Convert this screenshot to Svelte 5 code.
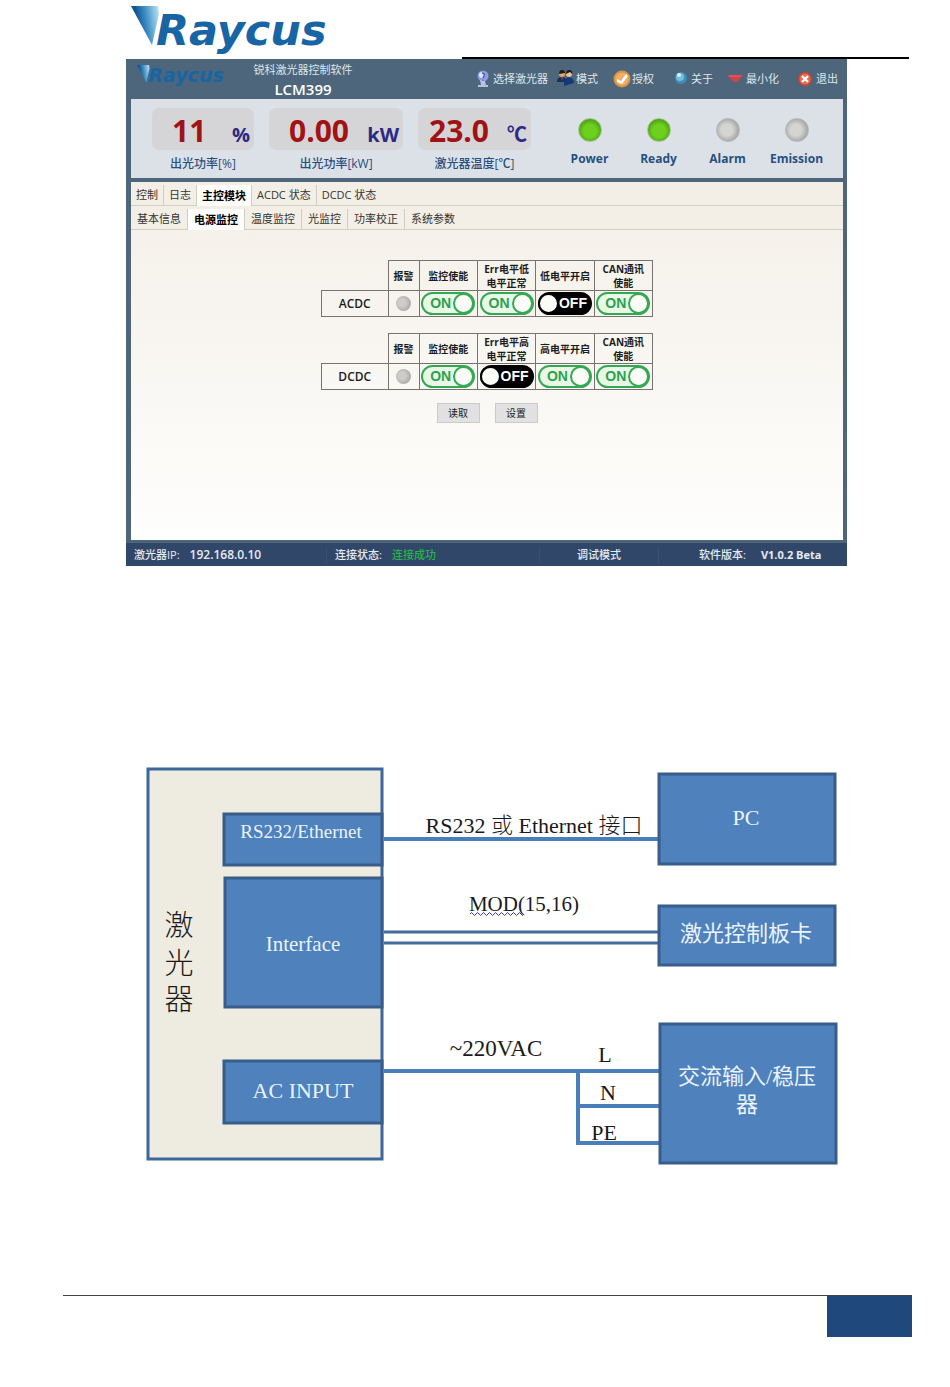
<script>
  const menu = [
    { icon: 'laser', label: '选择激光器' },
    { icon: 'users', label: '模式' },
    { icon: 'auth', label: '授权' },
    { icon: 'about', label: '关于' },
    { icon: 'min', label: '最小化' },
    { icon: 'exit', label: '退出' }
  ];

  const readings = [
    { value: '11', unit: '%', label: '出光功率[%]' },
    { value: '0.00', unit: 'kW', label: '出光功率[kW]' },
    { value: '23.0', unit: '℃', label: '激光器温度[℃]' }
  ];

  const leds = [
    { label: 'Power', on: true },
    { label: 'Ready', on: true },
    { label: 'Alarm', on: false },
    { label: 'Emission', on: false }
  ];

  const mainTabs = ['控制', '日志', '主控模块', 'ACDC 状态', 'DCDC 状态'];
  const subTabs = ['基本信息', '电源监控', '温度监控', '光监控', '功率校正', '系统参数'];
  let mainTab = $state('主控模块');
  let subTab = $state('电源监控');

  let supplies = $state([
    {
      name: 'ACDC',
      heads: [['监控使能'], ['Err电平低', '电平正常'], ['低电平开启'], ['CAN通讯', '使能']],
      values: [true, true, false, true]
    },
    {
      name: 'DCDC',
      heads: [['监控使能'], ['Err电平高', '电平正常'], ['高电平开启'], ['CAN通讯', '使能']],
      values: [true, false, true, true]
    }
  ]);

  // diagram
  const nodes = [
    { x: 224, y: 814, w: 158, h: 51 },
    { x: 225, y: 878, w: 157, h: 129 },
    { x: 224, y: 1061, w: 158, h: 62 },
    { x: 659, y: 774, w: 176, h: 90 },
    { x: 659, y: 906, w: 176, h: 59 },
    { x: 660, y: 1024, w: 176, h: 139 }
  ];

  const nodeTexts = [
    { x: 301, y: 838, size: 19, text: 'RS232/Ethernet' },
    { x: 303, y: 951, size: 21, text: 'Interface' },
    { x: 303, y: 1098, size: 22, text: 'AC INPUT' },
    { x: 746, y: 825, size: 22, text: 'PC' },
    { x: 746, y: 941, size: 22, text: '激光控制板卡' },
    { x: 747, y: 1084, size: 22, text: '交流输入/稳压' },
    { x: 747, y: 1112, size: 22, text: '器' }
  ];

  const wireTexts = [
    { x: 534, y: 833, size: 22, text: 'RS232 或 Ethernet 接口' },
    { x: 524, y: 911, size: 21, text: 'MOD(15,16)' },
    { x: 496, y: 1056, size: 23, text: '~220VAC' },
    { x: 605, y: 1062, size: 22, text: 'L' },
    { x: 608, y: 1100, size: 22, text: 'N' },
    { x: 604, y: 1140, size: 22, text: 'PE' },
    { x: 179, y: 936, size: 29, text: '激' },
    { x: 179, y: 974, size: 29, text: '光' },
    { x: 179, y: 1010, size: 29, text: '器' }
  ];
</script>

{#snippet logo(id)}
  <svg viewBox="0 0 200 52" aria-label="Raycus" role="img">
    <defs>
      <linearGradient id={id} x1="0" x2="1" y1="0.2" y2="0">
        <stop offset="0.15" stop-color="#0d5490" />
        <stop offset="0.5" stop-color="#3f8fc6" />
        <stop offset="1" stop-color="#c4e6f5" />
      </linearGradient>
    </defs>
    <path d="M0 0 H27 L28 8 L21 39 Z" fill="url(#{id})" />
    <text x="25" y="39" class="wordmark">Raycus</text>
  </svg>
{/snippet}

<div class="page">
  <header class="page-head">
    <div class="logo">{@render logo('logo-big')}</div>
    <div class="rule"></div>
  </header>

  <main class="app">
    <div class="title-bar">
      <div class="mini-logo">{@render logo('logo-small')}</div>
      <div class="title">
        <div class="name">锐科激光器控制软件</div>
        <div class="model">LCM399</div>
      </div>
      <nav class="menu">
        {#each menu as item}
          <button>
            <svg viewBox="0 0 20 18" aria-hidden="true">
              {#if item.icon === 'laser'}
                <circle cx="10" cy="6" r="5.5" fill="#8f9be0" />
                <circle cx="9" cy="5" r="3" fill="#dfe4ff" />
                <path d="M9 3 Q12 3 11 6 L10 8 M9 10 L13 13" stroke="#4652a8" stroke-width="1.5" fill="none" />
                <path d="M7 10 L12 11 L13 15 L8 15 Z" fill="#b9c0ee" />
                <path d="M5 16 H15" stroke="#dde1f5" stroke-width="1.5" />
              {:else if item.icon === 'users'}
                <circle cx="6" cy="4" r="3" fill="#d9a878" />
                <path d="M3 4 Q3 0 6 0 Q9 0 9 3 Z" fill="#201a18" />
                <path d="M1 12 Q1 7 6 7 Q10 7 10 12 Z" fill="#1c2f57" />
                <path d="M5 7 L6 11 L7 7 Z" fill="#c03038" />
                <circle cx="13" cy="4" r="3" fill="#edc393" />
                <path d="M10 4 Q10 0 13 0 Q17 0 16 4 L14 2 Z" fill="#201a18" />
                <path d="M8 16 Q7 8 13 7 Q18 8 18 13 Z" fill="#123a78" />
              {:else if item.icon === 'auth'}
                <circle cx="10" cy="9" r="8.5" fill="#dd9343" />
                <circle cx="10" cy="9" r="6.5" fill="#eeb069" />
                <path d="M5 9 L9 11 L14 4 L16 6 L10 14 L5 12 Z" fill="#fff" />
              {:else if item.icon === 'about'}
                <circle cx="10" cy="8" r="6" fill="#3f8db8" />
                <circle cx="9" cy="7" r="4" fill="#73bfdf" />
                <circle cx="8" cy="5" r="2" fill="#d9f3fb" />
              {:else if item.icon === 'min'}
                <path d="M1 5 H17 L11 12 H8 Z" fill="#d83f49" />
                <path d="M3 6 H15" stroke="#e4666b" stroke-width="1" />
              {:else}
                <circle cx="9" cy="9" r="7" fill="#c8452f" />
                <circle cx="9" cy="9" r="5.5" fill="#e46c50" />
                <path d="M6 6 L12 12 M12 6 L6 12" stroke="#fff" stroke-width="2.2" />
              {/if}
            </svg>
            {item.label}
          </button>
        {/each}
      </nav>
    </div>

    <section class="panel">
      <div class="readings">
        {#each readings as r}
          <div class="reading">
            <div class="box">
              <span class="value">{r.value}</span>
              <span class="unit">{r.unit}</span>
            </div>
            <div class="caption">{r.label}</div>
          </div>
        {/each}
      </div>
      <div class="leds">
        {#each leds as led}
          <div class="led-item">
            <span class="led" class:on={led.on}></span>
            <span>{led.label}</span>
          </div>
        {/each}
      </div>
    </section>

    <div class="tabs">
      {#each mainTabs as tab}
        <button class:active={tab === mainTab} onclick={() => (mainTab = tab)}>{tab}</button>
      {/each}
    </div>
    <div class="tabs sub">
      {#each subTabs as tab}
        <button class:active={tab === subTab} onclick={() => (subTab = tab)}>{tab}</button>
      {/each}
    </div>

    <section class="content">
      {#each supplies as supply}
        <table>
          <thead>
            <tr>
              <td class="name-col blank"></td>
              <th class="alarm-col">报警</th>
              {#each supply.heads as lines}
                <th>{#each lines as line}<div>{line}</div>{/each}</th>
              {/each}
            </tr>
          </thead>
          <tbody>
            <tr>
              <th class="supply">{supply.name}</th>
              <td><span class="dot"></span></td>
              {#each supply.values as value, i}
                <td>
                  <label class="toggle" class:off={!value}>
                    <input type="checkbox" bind:checked={supply.values[i]} aria-label={supply.heads[i].join('')} />
                    <span class="state">{value ? 'ON' : 'OFF'}</span>
                    <span class="knob"></span>
                  </label>
                </td>
              {/each}
            </tr>
          </tbody>
        </table>
      {/each}
      <div class="actions">
        <button>读取</button>
        <button>设置</button>
      </div>
    </section>

    <footer class="status">
      <div><span>激光器IP:</span><span class="ip">192.168.0.10</span></div>
      <div><span>连接状态:</span><span class="ok">连接成功</span></div>
      <div class="mode">调试模式</div>
      <div class="version"><span>软件版本:</span><b>V1.0.2 Beta</b></div>
    </footer>
  </main>

  <svg class="diagram" viewBox="146 766 692 399">
    <rect class="cabinet" x="148" y="769" width="234" height="390" />
    <path class="wire" d="M384 839 H659 M384 1071 H660 M578 1071 V1143 H660 M578 1106 H660" />
    <path class="wire pair" d="M384 932 H659 M384 943 H659" />
    {#each nodes as n}
      <rect class="node" x={n.x} y={n.y} width={n.w} height={n.h} />
    {/each}
    {#each nodeTexts as t}
      <text class="light" x={t.x} y={t.y} font-size={t.size}>{t.text}</text>
    {/each}
    {#each wireTexts as t}
      <text x={t.x} y={t.y} font-size={t.size}>{t.text}</text>
    {/each}
    <path class="squiggle" d="M470 914 q1.5 -3 3 0 t3 0 t3 0 t3 0 t3 0 t3 0 t3 0 t3 0 t3 0 t3 0 t3 0 t3 0 t3 0 t3 0 t3 0 t3 0 t3 0 t3 0" />
  </svg>

  <div class="page-foot">
    <div class="page-number"></div>
  </div>
</div>

<style>
  :global(body) {
    margin: 0;
    background: #fff;
  }

  .page {
    padding-bottom: 50px;
    font-family: "Open Sans", "Noto Sans CJK SC", sans-serif;
  }

  button {
    font: inherit;
    color: inherit;
    background: none;
    border: 0;
    padding: 0;
    cursor: pointer;
    white-space: nowrap;
  }

  .page-head {
    display: flex;
    height: 59px;
    padding: 0 41px 0 131px;
    box-sizing: border-box;
  }
  .logo {
    width: 200px;
    padding-top: 6px;
  }
  .logo svg,
  .mini-logo svg {
    display: block;
    width: 100%;
    overflow: visible;
  }
  .wordmark {
    font: italic bold 43px "DejaVu Sans", sans-serif;
    fill: #1765a5;
  }
  .rule {
    flex: 1;
    align-self: flex-end;
    height: 2px;
    margin-left: 131px;
    background: #000;
  }

  .app {
    margin: 0 103px 0 126px;
    background: #4d667b;
    font-size: 11px;
    line-height: 16px;
  }

  .title-bar {
    display: flex;
    height: 40px;
    padding: 0 8px 0 11px;
    color: #dfe6ec;
  }
  .mini-logo {
    width: 89px;
    padding-top: 6px;
  }
  .title {
    width: 154px;
    padding-top: 3px;
    text-align: center;
  }
  .model {
    color: #fff;
    font-size: 15px;
    font-weight: 600;
    line-height: 22px;
  }
  .menu {
    flex: 1;
    display: grid;
    grid-template-columns: 83fr 56fr 59fr 55fr 70fr 43fr;
    align-items: center;
    margin-left: 93px;
  }
  .menu button {
    display: flex;
    align-items: center;
  }
  .menu svg {
    width: 20px;
    height: 18px;
    flex: none;
  }

  .panel {
    display: flex;
    justify-content: space-between;
    height: 79px;
    margin: 0 4px 0 5px;
    padding: 9px 12px 0 21px;
    box-sizing: border-box;
    background: #dce1e8;
    color: #26507f;
  }
  .readings {
    display: grid;
    grid-template-columns: 102px 134px 113px;
    gap: 15px;
  }
  .reading {
    text-align: center;
  }
  .box {
    display: flex;
    align-items: baseline;
    justify-content: space-between;
    height: 42px;
    padding: 0 4px 0 20px;
    box-sizing: border-box;
    border-radius: 7px;
    background: #d5d5d7;
    font-weight: bold;
    line-height: 46px;
  }
  .value {
    color: #a11214;
    font-size: 30px;
  }
  .reading:last-child .box {
    padding-left: 11px;
  }
  .unit {
    color: #2b2a83;
    font-size: 20px;
  }
  .caption {
    padding-top: 6px;
    font-size: 12px;
    font-weight: 500;
  }
  .leds {
    display: grid;
    grid-template-columns: repeat(4, 69px);
    padding-top: 10px;
  }
  .led-item {
    display: flex;
    flex-direction: column;
    align-items: center;
    gap: 9px;
    font-size: 12px;
    font-weight: bold;
  }
  .led {
    width: 24px;
    height: 24px;
    box-sizing: border-box;
    border: 1px solid #b5b8ba;
    border-radius: 50%;
    background: radial-gradient(circle at 45% 50%, #d4d5d1 35%, #a2a4a3 75%);
  }
  .led.on {
    border-color: #a3c792;
    background: radial-gradient(circle at 50% 55%, #6cd01c 40%, #4c9b1a 75%);
  }

  .tabs {
    display: flex;
    height: 24px;
    margin: 0 4px 0 5px;
    box-sizing: border-box;
    border-bottom: 1px solid #d2cfc4;
    background: #f3efe7;
    color: #34332f;
  }
  .panel + .tabs {
    margin-top: 4px;
  }
  .tabs button {
    margin-top: 3px;
    padding: 0 5px;
    border-right: 1px solid #cfccc2;
  }
  .tabs button:last-child {
    border-right: 0;
  }
  .tabs.sub button {
    padding: 0 6px;
  }
  .tabs .active {
    margin-bottom: -1px;
    background: #fdfdfb;
    color: #000;
    font-weight: bold;
  }

  .content {
    display: flex;
    flex-direction: column;
    align-items: center;
    gap: 16px;
    margin: 0 4px 0 5px;
    padding: 30px 0 117px;
    background: linear-gradient(#f5f1ea, #fefefd);
  }
  table {
    border-collapse: collapse;
    table-layout: fixed;
    width: 332px;
    color: #1c1c1c;
  }
  th,
  td {
    height: 25px;
    padding: 0;
    border: 1px solid #77736f;
    font-size: 10px;
    line-height: 14px;
    text-align: center;
    white-space: nowrap;
  }
  thead th {
    height: 29px;
  }
  .name-col {
    width: 66px;
  }
  .alarm-col {
    width: 30px;
  }
  .blank {
    border-top: 0;
    border-left: 0;
  }
  .supply {
    font-size: 12px;
    font-weight: 600;
  }
  .dot {
    display: block;
    width: 15px;
    height: 15px;
    margin: 0 auto;
    border-radius: 50%;
    background: radial-gradient(circle at 40% 45%, #ceccca 30%, #a9a8a7 75%);
  }
  .toggle {
    position: relative;
    display: flex;
    align-items: center;
    justify-content: space-between;
    width: 54px;
    height: 23px;
    margin: 0 auto;
    padding-left: 7px;
    box-sizing: border-box;
    border: 2px solid #35a853;
    border-radius: 12px;
    background: #e9f8e6;
    color: #2ba24b;
    cursor: pointer;
  }
  .toggle input {
    position: absolute;
    inset: 0;
    margin: 0;
    opacity: 0;
  }
  .state {
    font: bold 14px "Liberation Sans", sans-serif;
    line-height: 19px;
  }
  .knob {
    flex: none;
    width: 21px;
    height: 21px;
    margin-right: -1px;
    box-sizing: border-box;
    border: 2px solid #35a853;
    border-radius: 50%;
    background: #fbfbf8;
  }
  .toggle.off {
    flex-direction: row-reverse;
    padding: 0 3px 0 0;
    border-color: #000;
    background: #000;
    color: #fff;
  }
  .toggle.off .knob {
    margin: 0 0 0 -1px;
    border-color: #000;
  }

  .actions {
    display: flex;
    gap: 15px;
    margin-top: -3px;
  }
  .actions button {
    width: 43px;
    height: 20px;
    border: 1px solid #cbcbcb;
    background: #e1e1e1;
    color: #222;
    font-size: 10px;
  }

  .status {
    display: grid;
    grid-template-columns: 201fr 213fr 119fr 188fr;
    align-items: center;
    height: 23px;
    margin-top: 3px;
    background: #31476a;
    color: #e6ebf2;
  }
  .status div {
    display: flex;
    gap: 10px;
    padding-left: 8px;
    border-right: 1px solid #3a5073;
    font-weight: 500;
  }
  .status .ip {
    font-size: 12px;
    font-weight: 600;
  }
  .status .ok {
    color: #27b34b;
  }
  .status .mode {
    justify-content: center;
    padding: 0;
  }
  .status .version {
    gap: 15px;
    padding-left: 40px;
    border: 0;
  }

  .diagram {
    display: block;
    width: calc(100% - 258px);
    margin: 200px 112px 0 146px;
    font-family: "Liberation Serif", "Noto Sans CJK SC", serif;
    font-weight: 300;
  }
  .diagram text {
    fill: #1a1a1a;
    text-anchor: middle;
  }
  .diagram text.light {
    fill: #eaf4ff;
    font-weight: 400;
  }
  .cabinet {
    fill: #eeebe1;
    stroke: #3c679b;
    stroke-width: 3;
  }
  .node {
    fill: #4f81bd;
    stroke: #385d8a;
    stroke-width: 3;
  }
  .wire {
    fill: none;
    stroke: #4a7ebb;
    stroke-width: 4;
  }
  .wire.pair {
    stroke: #426c9c;
    stroke-width: 3;
  }
  .squiggle {
    fill: none;
    stroke: #3a3ae0;
    stroke-width: 1;
  }

  .page-foot {
    display: flex;
    justify-content: flex-end;
    margin: 130px 38px 0 63px;
    border-top: 1px solid #444;
  }
  .page-number {
    width: 85px;
    height: 41px;
    background: #1f497d;
  }
</style>
